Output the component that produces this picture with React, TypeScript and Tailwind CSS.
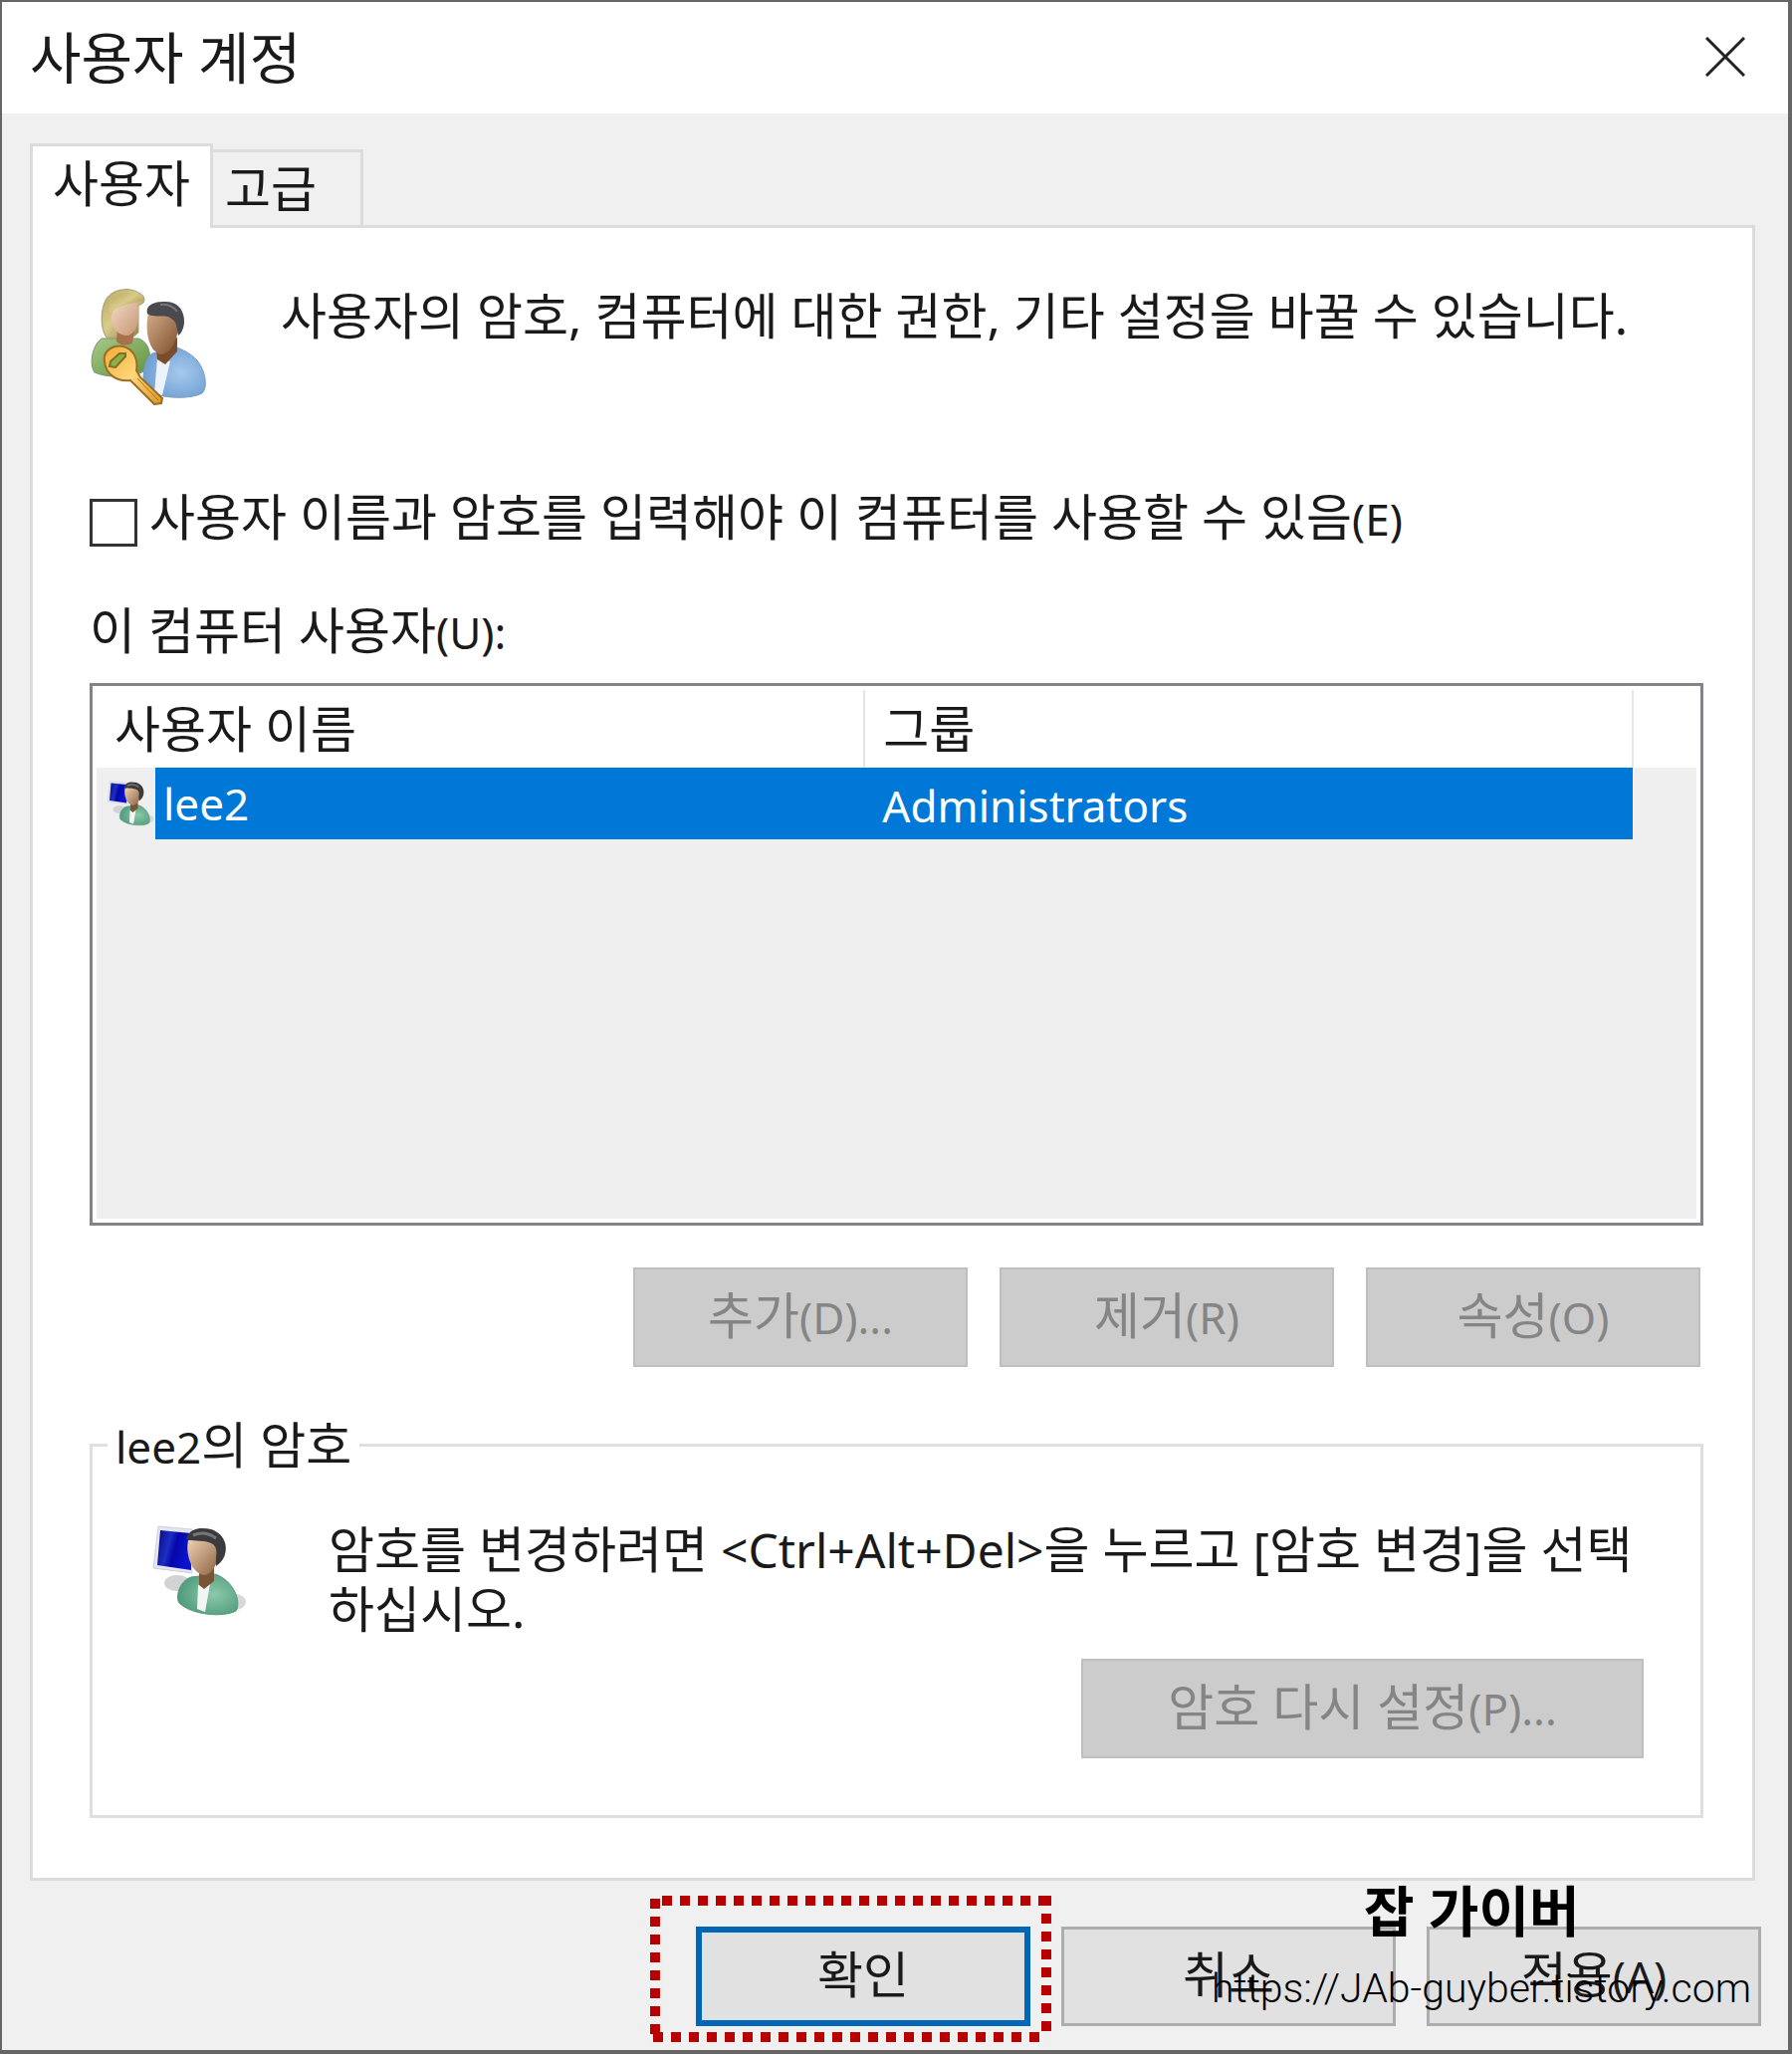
import { type ReactNode } from "react";
import clsx from "clsx";

const FONT = "font-['Noto_Sans','Noto_Sans_CJK_KR',sans-serif]";

const TABS = [
  { id: "users", label: "사용자" },
  { id: "advanced", label: "고급" },
];

const USERS = [{ name: "lee2", group: "Administrators" }];

function UsersKeyIcon() {
  return (
    <svg viewBox="9 8 120 120" className="size-[120px] shrink-0" aria-hidden="true">
      <defs>
        <linearGradient id="blond" x1="0" y1="0" x2="1" y2="1">
          <stop offset="0" stopColor="#b5a564" />
          <stop offset="0.45" stopColor="#d9cb88" />
          <stop offset="1" stopColor="#8a7440" />
        </linearGradient>
        <linearGradient id="paleFace" x1="0" y1="0" x2="1" y2="1">
          <stop offset="0" stopColor="#f3d9c3" />
          <stop offset="1" stopColor="#c39574" />
        </linearGradient>
        <linearGradient id="tanFace" x1="0" y1="0" x2="1" y2="1">
          <stop offset="0" stopColor="#d3ab8a" />
          <stop offset="1" stopColor="#7d4f2b" />
        </linearGradient>
        <linearGradient id="greenShirt" x1="0" y1="0" x2="1" y2="1">
          <stop offset="0" stopColor="#a7ca86" />
          <stop offset="1" stopColor="#5f9140" />
        </linearGradient>
        <radialGradient id="blueShirt" cx="0.6" cy="0.5" r="0.6">
          <stop offset="0" stopColor="#a6c9ee" />
          <stop offset="1" stopColor="#6f9fd2" />
        </radialGradient>
        <linearGradient id="keyGold" x1="0" y1="0" x2="1" y2="1">
          <stop offset="0" stopColor="#f3ab38" />
          <stop offset="0.5" stopColor="#ffd679" />
          <stop offset="1" stopColor="#dc9526" />
        </linearGradient>
      </defs>
      <path d="M21 61C12 68 8 86 14 95C30 102 56 100 67 92C72 80 70 65 58 61Z" fill="url(#greenShirt)" stroke="#7b9468" />
      <path d="M26 60C19 50 20 30 26 21C32 11 50 9 58 15C64 17 65 22 63 25L58 28V55L51 61Z" fill="url(#blond)" stroke="#a29a76" />
      <path d="M37 50H54L52 66Q42 70 36 64Z" fill="#a9704c" />
      <path d="M31 38C33 28 42 27 56 24C61 38 58 54 48 58C36 58 30 50 31 38Z" fill="url(#paleFace)" />
      <path d="M30 36C36 27 48 27 63 23C61 15 48 13 38 17C29 21 27 29 30 36Z" fill="url(#blond)" />
      <path d="M72 76C62 82 61 108 66 114C84 122 111 122 122 116C129 109 124 91 117 83C110 75 101 72 97 70Z" fill="url(#blueShirt)" stroke="#7d9dc0" />
      <path d="M77 81L74 116L82 118L90 84Z" fill="#edf3fa" />
      <path d="M75 64L77 82L85 87L97 74V60Z" fill="#7b4c29" />
      <path d="M68 35H94C103 45 96 75 81 77C69 75 64 55 68 35Z" fill="url(#tanFace)" />
      <path d="M67 36C65 27 74 24 84 24C99 23 105 35 104 46C103 52 101 56 98 58C96 49 97 44 91 41C86 36 73 41 67 36Z" fill="#4a4a4e" />
      <path d="M80 27Q90 25 97 34" fill="none" stroke="#77777b" strokeWidth="2" />
      <path d="M24 84C22 73 33 67 43 69C54 72 58 83 56 93L60 100L82 121L81 126L74 127L50 103C37 105 25 97 24 84Z" fill="url(#keyGold)" stroke="#9c6d24" strokeWidth="2" />
      <path d="M57 101L78 123" stroke="#a97420" strokeWidth="1" />
      <path d="M29 89L30 84L39 76L45 76L45 79L35 90Z" fill="#8eae4b" stroke="#7d7125" strokeWidth="2" />
    </svg>
  );
}

function LocalUserIcon({ className }: { className: string }) {
  return (
    <svg viewBox="12 21 96 96" className={className} aria-hidden="true">
      <defs>
        <linearGradient id="screen" x1="0" y1="0" x2="1" y2="0.3">
          <stop offset="0" stopColor="#07077b" />
          <stop offset="0.4" stopColor="#1b2fc4" />
          <stop offset="0.6" stopColor="#0606a8" />
          <stop offset="1" stopColor="#0a14d0" />
        </linearGradient>
        <linearGradient id="userFace" x1="0" y1="0" x2="1" y2="1">
          <stop offset="0" stopColor="#eed0b1" />
          <stop offset="1" stopColor="#8b6342" />
        </linearGradient>
        <radialGradient id="tealShirt" cx="0.6" cy="0.5" r="0.6">
          <stop offset="0" stopColor="#8cc9ab" />
          <stop offset="1" stopColor="#4f9c7c" />
        </radialGradient>
      </defs>
      <ellipse cx="38" cy="81" rx="13" ry="8" fill="#d3d3d5" />
      <ellipse cx="96" cy="100" rx="11" ry="8" fill="#d8d8da" />
      <path d="M19 24L53 27V71L14 66Z" fill="#e4e5ee" stroke="#d0d0dc" />
      <path d="M21 28L52 31V68L18 63Z" fill="url(#screen)" />
      <path d="M52 75C40 79 36 95 40 101C52 113 84 116 97 109C103 99 94 78 76 72Z" fill="url(#tealShirt)" stroke="#5c9a80" />
      <path d="M59 83L58 107L66 110L71 82Z" fill="#f2f5f4" />
      <path d="M60 70V83L65 87L75 79V64Z" fill="#795436" />
      <path d="M49 38H76C83 50 77 72 65 73C53 71 46 54 49 38Z" fill="url(#userFace)" />
      <path d="M47 37C50 25 63 25 72 27C85 31 90 44 85 55C83 59 80 62 77 64C76 54 80 47 74 42C66 37 57 40 47 37Z" fill="#3b3b3e" />
      <path d="M54 33Q66 28 77 36" fill="none" stroke="#77777a" strokeWidth="3" />
    </svg>
  );
}

/* Latin letters are set a little smaller than the Hangul beside them. */
function Latin({ children }: { children: ReactNode }) {
  return <span className="text-[44px] leading-none">{children}</span>;
}

function DialogButton({
  children,
  disabled,
  primary,
  className = "w-[336px]",
}: {
  children: ReactNode;
  disabled?: boolean;
  primary?: boolean;
  className?: string;
}) {
  return (
    <button
      type="button"
      disabled={disabled}
      className={clsx(
        "h-[100px] shrink-0 pb-1",
        className,
        disabled && "border-2 border-[#bfbfbf] bg-[#cccccc] text-[#858585]",
        primary && "border-6 border-[#0067b8] bg-[#e1e1e1]",
        !disabled && !primary && "border-3 border-[#adadad] bg-[#e1e1e1]",
      )}
    >
      {children}
    </button>
  );
}

/* Red dotted marker drawn around the default button. */
function Highlight() {
  return (
    <svg className="pointer-events-none absolute -top-[31px] -left-[46px] h-[147px] w-[403px]" aria-hidden="true">
      <g stroke="#b80000" strokeWidth="10" strokeDasharray="10 8">
        <path d="M12 5H403" />
        <path d="M5 3V147" />
        <path d="M398 0V138" />
        <path d="M391 142H0" />
      </g>
    </svg>
  );
}

function UserTable() {
  return (
    <div className="h-[545px] border-3 border-[#828489] bg-white p-1">
      <div className="h-full bg-[#efefef]">
        <table className="w-full table-fixed border-collapse text-left" aria-labelledby="user-list-label">
          <colgroup>
            <col className="w-[48%]" />
            <col className="w-[48%]" />
            <col />
          </colgroup>
          <thead className="bg-white">
            <tr className="h-[78px]">
              <th className="border-r-2 border-[#e5e5e5] py-0 pl-[18px] font-normal">사용자 이름</th>
              <th className="border-r-2 border-[#e5e5e5] py-0 pl-[18px] font-normal">그룹</th>
              <td />
            </tr>
          </thead>
          <tbody>
            {USERS.map((user) => (
              <tr key={user.name} className="h-[72px] text-white">
                <td className="p-0">
                  <div className="flex h-[72px]">
                    <div className="w-[59px] bg-[#efefef] pt-3 pl-[10px]">
                      <LocalUserIcon className="size-12" />
                    </div>
                    <div className="flex flex-1 items-center bg-[#0078d7] pl-2">
                      <Latin>{user.name}</Latin>
                    </div>
                  </div>
                </td>
                <td className="bg-[#0078d7] py-0 pl-[18px]">
                  <Latin>{user.group}</Latin>
                </td>
                <td />
              </tr>
            ))}
          </tbody>
        </table>
      </div>
    </div>
  );
}

export default function App() {
  return (
    <div
      className={clsx(
        FONT,
        "flex min-h-screen flex-col border-t-2 border-r-4 border-b-4 border-l-2 border-[#666666] bg-[#f0f0f0] text-[50px] leading-[60px] text-[#1a1a1a]",
      )}
    >
      <header className="flex h-[112px] items-center justify-between bg-white pr-[43px] pb-[2px] pl-7">
        <h1 className="text-[56px]">사용자 계정</h1>
        <button type="button" aria-label="닫기">
          <svg viewBox="0 0 40 40" className="size-10" fill="none" stroke="#222" strokeWidth="3">
            <path d="M1 1L39 39M39 1L1 39" />
          </svg>
        </button>
      </header>

      <main className="px-7 pt-[30px] pr-[33px]">
        <div role="tablist" className="flex items-end">
          {TABS.map((tab, i) => (
            <button
              key={tab.id}
              type="button"
              role="tab"
              aria-selected={i === 0}
              className={clsx(
                "border-3 border-b-0 border-[#dcdcdc] text-left",
                i === 0
                  ? "relative z-10 -mb-[3px] h-[85px] w-[184px] bg-white pb-2 pl-5"
                  : "-ml-[3px] h-[76px] w-[154px] bg-[#f0f0f0] pb-[2px] pl-3",
              )}
            >
              {tab.label}
            </button>
          ))}
        </div>

        <section role="tabpanel" className="border-3 border-[#dcdcdc] bg-white pt-[58px] pr-[49px] pb-[60px] pl-[57px]">
          <div className="flex gap-[72px]">
            <UsersKeyIcon />
            <p>사용자의 암호, 컴퓨터에 대한 권한, 기타 설정을 바꿀 수 있습니다.</p>
          </div>

          <label className="mt-[82px] flex items-center gap-3">
            <input type="checkbox" className="mt-3 size-12 shrink-0 appearance-none border-3 border-[#333333] bg-white" />
            <span>
              사용자 이름과 암호를 입력해야 이 컴퓨터를 사용할 수 있음<Latin>(E)</Latin>
            </span>
          </label>

          <p id="user-list-label" className="mt-[54px] mb-[23px]">
            이 컴퓨터 사용자<Latin>(U):</Latin>
          </p>
          <UserTable />

          <div className="mt-[42px] mr-[3px] flex justify-end gap-8">
            <DialogButton disabled>추가<Latin>(D)...</Latin></DialogButton>
            <DialogButton disabled>제거<Latin>(R)</Latin></DialogButton>
            <DialogButton disabled>속성<Latin>(O)</Latin></DialogButton>
          </div>

          <fieldset className="mt-12 border-3 border-[#dfdfdf] pt-[45px] pr-[57px] pb-[57px] pl-[59px]">
            <legend className="-ml-[44px] px-2">
              <Latin>lee2</Latin>의 암호
            </legend>
            <div className="flex gap-[82px]">
              <LocalUserIcon className="mt-1 size-24 shrink-0" />
              <p className="break-all">
                암호를 변경하려면 <span className="text-[48px] leading-none">&lt;Ctrl+Alt+Del&gt;</span>을 누르고 [암호 변경]을
                선택하십시오.
              </p>
            </div>
            <div className="mt-5 flex justify-end">
              <DialogButton disabled className="w-[565px]">암호 다시 설정<Latin>(P)...</Latin></DialogButton>
            </div>
          </fieldset>
        </section>
      </main>

      <footer className="relative flex justify-end gap-[31px] pt-[46px] pr-[27px] pb-6">
        <div className="relative">
          <DialogButton primary>확인</DialogButton>
          <Highlight />
        </div>
        <DialogButton>취소</DialogButton>
        <DialogButton>적용<Latin>(A)</Latin></DialogButton>

        <div className="pointer-events-none absolute top-0 right-[37px] text-black">
          <p className="ml-[153px] text-[55px] font-bold">잡 가이버</p>
          <p className="mt-[18px] font-[Roboto,sans-serif] text-[41px] font-light">https://JAb-guyber.tistory.com</p>
        </div>
      </footer>
    </div>
  );
}
